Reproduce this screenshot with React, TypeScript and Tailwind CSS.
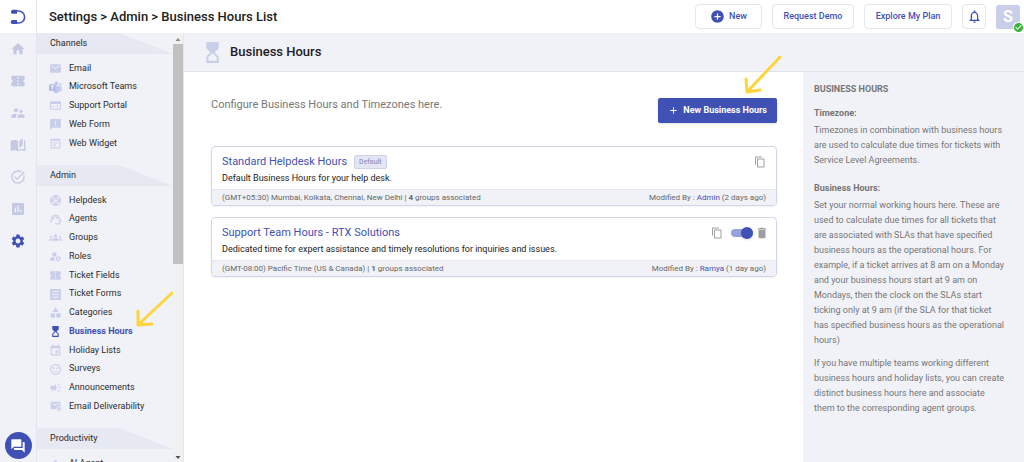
import { useState } from "react"
import type { ReactNode } from "react"
import type { IconType } from "react-icons"
import {
  MdHome,
  MdConfirmationNumber,
  MdSupervisorAccount,
  MdAutoStories,
  MdTaskAlt,
  MdInsertChart,
  MdSettings,
  MdQuestionAnswer,
  MdEmail,
  MdWeb,
  MdFeedback,
  MdOutlineWysiwyg,
  MdSupport,
  MdSupportAgent,
  MdGroups,
  MdManageAccounts,
  MdCategory,
  MdHourglassTop,
  MdEvent,
  MdSentimentSatisfiedAlt,
  MdCampaign,
  MdUnsubscribe,
  MdAddCircle,
  MdAdd,
  MdNotificationsNone,
  MdCheckCircle,
  MdContentCopy,
  MdDelete,
} from "react-icons/md"

type NavItem = { label: string; icon: IconType }

const TicketForm = (({ size = 12, className }: { size?: number; className?: string }) => (
  <svg width={size} height={size} viewBox="0 0 24 24" fill="currentColor" className={className}>
    <path
      fillRule="evenodd"
      d="M3 2h18a1 1 0 0 1 1 1v18a1 1 0 0 1-1 1H3a1 1 0 0 1-1-1V3a1 1 0 0 1 1-1zm3 4v2h12V6zm0 5v2h12v-2zm0 5v2h12v-2z"
    />
  </svg>
)) as IconType

const Teams = (({ size = 12 }: { size?: number }) => (
  <svg width={size} height={size} viewBox="0 0 24 24" fill="none">
    <circle cx="20.5" cy="6.5" r="2.5" fill="#cdd2f0" />
    <circle cx="13.5" cy="4.5" r="3.5" fill="#c3c9ee" />
    <path d="M16 10h8v6a4 4 0 0 1-7 2.500z" fill="#cdd2f0" />
    <path d="M8 9h11v8a6 6 0 0 1-11 3z" fill="#c3c9ee" />
    <rect y="6" width="12" height="12" rx="1" fill="#b3bbe6" />
    <path d="M3 9h6M6 9v6.5" stroke="#fff" strokeWidth="1.6" />
  </svg>
)) as IconType

const rail: NavItem[] = [
  { label: "Home",      icon: MdHome               },
  { label: "Tickets",   icon: MdConfirmationNumber },
  { label: "Contacts",  icon: MdSupervisorAccount  },
  { label: "Knowledge", icon: MdAutoStories        },
  { label: "Tasks",     icon: MdTaskAlt            },
  { label: "Reports",   icon: MdInsertChart        },
  { label: "Settings",  icon: MdSettings           },
]

const channels: NavItem[] = [
  { label: "Email",           icon: MdEmail          },
  { label: "Microsoft Teams", icon: Teams            },
  { label: "Support Portal",  icon: MdWeb            },
  { label: "Web Form",        icon: MdFeedback       },
  { label: "Web Widget",      icon: MdOutlineWysiwyg },
]

const admin: NavItem[] = [
  { label: "Helpdesk",             icon: MdSupport               },
  { label: "Agents",               icon: MdSupportAgent          },
  { label: "Groups",               icon: MdGroups                },
  { label: "Roles",                icon: MdManageAccounts        },
  { label: "Ticket Fields",        icon: MdConfirmationNumber    },
  { label: "Ticket Forms",         icon: TicketForm              },
  { label: "Categories",           icon: MdCategory              },
  { label: "Business Hours",       icon: MdHourglassTop          },
  { label: "Holiday Lists",        icon: MdEvent                 },
  { label: "Surveys",              icon: MdSentimentSatisfiedAlt },
  { label: "Announcements",        icon: MdCampaign              },
  { label: "Email Deliverability", icon: MdUnsubscribe           },
]

const schedules = [
  {
    title: "Standard Helpdesk Hours",
    description: "Default Business Hours for your help desk.",
    zone: "(GMT+05:30) Mumbai, Kolkata, Chennai, New Delhi",
    groups: 4,
    author: "Admin",
    when: "2 days ago",
    isDefault: true,
  },
  {
    title: "Support Team Hours - RTX Solutions",
    description: "Dedicated time for expert assistance and timely resolutions for inquiries and issues.",
    zone: "(GMT-08:00) Pacific Time (US & Canada)",
    groups: 1,
    author: "Ramya",
    when: "1 day ago",
    isDefault: false,
  },
]

function Logo() {
  return (
    <svg width="16" height="16" viewBox="0 0 48 48" fill="none">
      <path d="M20 6h6a18 18 0 0 1 0 36h-6" stroke="#4457c0" strokeWidth="5" />
      <path d="M8 2h13v12H8a5 5 0 0 1-5-6 6 6 0 0 1 5-6z" fill="#3f51b5" />
      <path d="M8 33h13v12H8a6 6 0 0 1 0-12z" fill="#3f51b5" />
    </svg>
  )
}

function Arrow({ className }: { className: string }) {
  return (
    <svg
      width="40"
      height="42"
      viewBox="0 0 40 42"
      fill="none"
      stroke="#ffd43b"
      strokeWidth="3"
      strokeLinecap="round"
      strokeLinejoin="round"
      className={`pointer-events-none absolute z-10 ${className}`}
    >
      <path d="M37 3 4 38M3 25l1 13 13-2" />
    </svg>
  )
}

function SectionTitle({ children }: { children: ReactNode }) {
  return (
    <div className="relative flex h-[21px] items-center pl-[13px]">
      <svg viewBox="0 0 136 21" preserveAspectRatio="none" className="absolute inset-0 h-full w-full">
        <path d="M0 0h82l54 21H0z" fill="#e6e8f2" />
      </svg>
      <h2 className="relative">{children}</h2>
    </div>
  )
}

function NavLink({ label, icon: Icon }: NavItem) {
  const isActive = label === "Business Hours"

  return (
    <li className="relative flex flex-1 items-center">
      <a
        href="#"
        className={`flex items-center gap-[7px] pl-3 ${isActive ? "font-bold text-[#3f51b5]" : ""}`}
      >
        <Icon size={13} className={isActive ? "" : "text-[#c9cfe8]"} />
        {label}
      </a>
      {isActive && (
        <svg
          width="42"
          height="40"
          viewBox="0 0 42 40"
          fill="none"
          stroke="#ffd43b"
          strokeWidth="3"
          strokeLinecap="round"
          strokeLinejoin="round"
          className="pointer-events-none absolute -right-0.5 bottom-3 z-10"
        >
          <path d="M39 4 5 36M5 22v14l14-1" />
        </svg>
      )}
    </li>
  )
}

function Schedule({ item }: { item: (typeof schedules)[number] }) {
  const [enabled, setEnabled] = useState(true)

  return (
    <article className="overflow-hidden rounded border border-[#d0d5ec] shadow-xs">
      <div className="flex h-[42px] justify-between px-2.5 pt-[7px]">
        <div>
          <div className="flex h-4 items-center gap-[7px]">
            <h3 className="text-[11px]">
              <a href="#" className="text-[#3f51b5]">{item.title}</a>
            </h3>
            {item.isDefault && (
              <span className="rounded-xs border border-[#ccd1e8] bg-[#e4e7f3] px-1 text-[7px] leading-3 font-medium text-[#8f98c8]">
                Default
              </span>
            )}
          </div>
          <p className="text-[9px] leading-4 text-[#222]">{item.description}</p>
        </div>
        <div className="flex h-4 items-center gap-2 text-[#9e9e9e]">
          <button aria-label="Copy"><MdContentCopy size={12} /></button>
          {!item.isDefault && (
            <>
              <label className="relative flex h-3 w-[22px] items-center">
                <input
                  type="checkbox"
                  aria-label="Enabled"
                  checked={enabled}
                  onChange={() => setEnabled(!enabled)}
                  className="peer h-2 w-full appearance-none rounded-full bg-[#c5c5c5] checked:bg-[#97a1db]"
                />
                <span className="pointer-events-none absolute left-0 size-3 rounded-full bg-[#eee] shadow-sm peer-checked:right-0 peer-checked:left-auto peer-checked:bg-[#3f51b5]" />
              </label>
              <button aria-label="Delete" className="-mr-[3px] -ml-1.5"><MdDelete size={14} /></button>
            </>
          )}
        </div>
      </div>
      <div className="flex h-4 items-center justify-between border-t border-[#e6e8f2] bg-[#f1f2f8] px-2.5 text-[8px] text-[#666]">
        <p>{item.zone} | <b>{item.groups}</b> groups associated</p>
        <p>Modified By : <a href="#" className="text-[#3f51b5]">{item.author}</a> ({item.when})</p>
      </div>
    </article>
  )
}

const headerButton =
  "flex h-[25px] items-center justify-center gap-1 rounded-sm border border-[#e4e6ee] font-medium text-[#3f51b5]"

export default function App() {
  return (
    <div className="flex h-screen overflow-hidden bg-white font-['Roboto',sans-serif] text-[9px] text-[#2b2b2b]">
      {/* Icon rail */}
      <nav className="flex w-[37px] shrink-0 flex-col items-center border-r border-[#e2e4ee] bg-[#f1f2f8]">
        <a href="#" aria-label="Dashboard" className="flex h-[33px] w-full items-center justify-center bg-white">
          <Logo />
        </a>
        {rail.map(({ label, icon: Icon }) => (
          <a
            key={label}
            href="#"
            aria-label={label}
            className={`flex h-8 items-center ${label === "Settings" ? "text-[#3f51b5]" : "text-[#c3c9e3]"}`}
          >
            <Icon size={16} />
          </a>
        ))}
        <button
          aria-label="Chat"
          className="mt-auto mb-[3px] flex size-[27px] items-center justify-center rounded-full bg-[#3f51b5] text-white"
        >
          <MdQuestionAnswer size={16} />
        </button>
      </nav>

      <div className="flex min-w-0 flex-1 flex-col">
        <header className="flex h-[33px] shrink-0 items-center justify-between pr-1 pl-3">
          <h1 className="text-[13px] font-medium text-[#212121]">Settings &gt; Admin &gt; Business Hours List</h1>
          <div className="flex items-center gap-2.5">
            <button className={`${headerButton} w-[67px]`}>
              <MdAddCircle size={15} /> New
            </button>
            <button className={`${headerButton} w-[82px]`}>Request Demo</button>
            <button className={`${headerButton} w-[88px]`}>Explore My Plan</button>
            <button aria-label="Notifications" className={`${headerButton} w-6`}>
              <MdNotificationsNone size={15} />
            </button>
            <button
              aria-label="Profile"
              className="relative flex size-6 items-center justify-center rounded-xs bg-[#c9cfe8] text-base font-bold text-white"
            >
              S
              <span className="absolute -right-1 -bottom-1 rounded-full bg-white text-[#3bb33b]">
                <MdCheckCircle size={11} />
              </span>
            </button>
          </div>
        </header>

        <div className="flex min-h-0 flex-1">
          {/* Settings menu */}
          <aside className="flex w-[147px] shrink-0 border-r border-[#e2e4ee] bg-[#f1f2f8]">
            <nav className="min-w-0 flex-1 overflow-hidden">
              <SectionTitle>Channels</SectionTitle>
              <ul className="mt-[5px] mb-3 flex h-[94px] flex-col">
                {channels.map((item) => <NavLink key={item.label} {...item} />)}
              </ul>
              <SectionTitle>Admin</SectionTitle>
              <ul className="mt-[5px] mb-3 flex h-[225px] flex-col">
                {admin.map((item) => <NavLink key={item.label} {...item} />)}
              </ul>
              <SectionTitle>Productivity</SectionTitle>
              <ul className="mt-[5px] flex h-[19px] flex-col">
                <NavLink label="AI Agent" icon={MdGroups} />
              </ul>
            </nav>
            {/* Scrollbar */}
            <div className="flex w-2.5 flex-col items-center bg-[#f1f1f1]">
              <svg width="10" height="11" viewBox="0 0 10 11"><path d="M2.500 8 5 5l2.500 3z" fill="#8a8a8a" /></svg>
              <div className="h-[220px] w-full bg-[#c1c1c1]" />
              <svg width="10" height="11" viewBox="0 0 10 11" className="mt-auto"><path d="M2.500 5 5 8l2.500-3z" fill="#505050" /></svg>
            </div>
          </aside>

          <div className="flex min-w-0 flex-1 flex-col">
            <div className="flex h-[39px] shrink-0 items-center gap-[5px] border-b border-[#dfe2ee] bg-[#f1f2f8] pl-4">
              <MdHourglassTop size={25} className="text-[#c9cfe8]" />
              <h2 className="text-[13px] font-medium text-[#212121]">Business Hours</h2>
            </div>

            <div className="flex min-h-0 flex-1">
              <main className="min-w-0 flex-1 pt-[26px] pr-[26px] pl-[27px]">
                <div className="flex justify-between">
                  <p className="text-[11px] leading-[14px] text-[#777]">Configure Business Hours and Timezones here.</p>
                  <div className="relative">
                    <button className="flex h-[25px] items-center gap-1 rounded-xs bg-[#3f51b5] px-2.5 font-bold text-white shadow">
                      <MdAdd size={11} /> New Business Hours
                    </button>
                    <Arrow className="-right-1.5 bottom-[27px]" />
                  </div>
                </div>
                <div className="mt-[23px] flex flex-col gap-[11px]">
                  {schedules.map((item) => <Schedule key={item.title} item={item} />)}
                </div>
              </main>

              <aside className="w-[221px] shrink-0 bg-[#f1f2f8] pt-2.5 pr-[17px] pl-[11px] leading-[15px] text-[#757575]">
                <h3 className="font-bold">BUSINESS HOURS</h3>
                <h4 className="mt-[9px] font-bold">Timezone:</h4>
                <p className="mt-0.5">
                  Timezones in combination with business hours are used to calculate due times for tickets with
                  Service Level Agreements.
                </p>
                <h4 className="mt-[13px] font-bold">Business Hours:</h4>
                <p className="mt-0.5">
                  Set your normal working hours here. These are used to calculate due times for all tickets that are
                  associated with SLAs that have specified business hours as the operational hours. For example, if a
                  ticket arrives at 8 am on a Monday and your business hours start at 9 am on Mondays, then the clock
                  on the SLAs start ticking only at 9 am (if the SLA for that ticket has specified business hours as
                  the operational hours)
                </p>
                <p className="mt-2">
                  If you have multiple teams working different business hours and holiday lists, you can create
                  distinct business hours here and associate them to the corresponding agent groups.
                </p>
              </aside>
            </div>
          </div>
        </div>
      </div>
    </div>
  )
}
